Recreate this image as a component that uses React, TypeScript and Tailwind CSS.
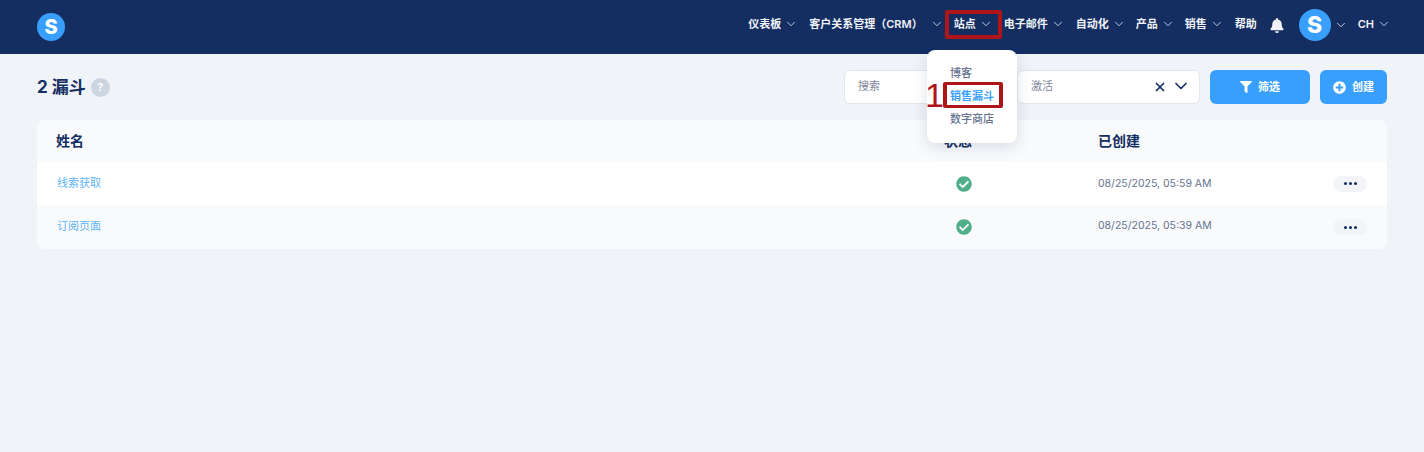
import { ChevronDown, X } from 'lucide-react';
import { FaBell, FaCheckCircle, FaFilter, FaPlusCircle } from 'react-icons/fa';

const font = "font-['Inter','Noto_Sans_CJK_SC',sans-serif]";

function NavItem({ label, gap = 'ml-[3px]', mr = 'mr-[11px]' }: { label: string; gap?: string; mr?: string }) {
  return (
    <div className={`flex items-center mb-[2px] ${mr}`}>
      <span className="text-[11px] font-semibold text-[#f1f3f8] whitespace-nowrap">{label}</span>
      <ChevronDown className={`w-[14px] h-[14px] text-[#d5dbe8] ${gap}`} strokeWidth={1.5} />
    </div>
  );
}

function Row({ name, date, striped }: { name: string; date: string; striped?: boolean }) {
  return (
    <div className={`grid grid-cols-[887px_154px_1fr] items-center pl-5 pr-5 ${striped ? 'h-[44px] bg-[#f9fafc]' : 'h-[43px] bg-white'}`}>
      <a className={`text-[11px] text-[#5fb3f6] ${striped ? 'pb-[2px]' : ''}`}>{name}</a>
      <div className="pl-[12px]">
        <FaCheckCircle className="w-4 h-4 text-[#50ae88]" />
      </div>
      <div className="flex items-center justify-between">
        <span className={`text-[10.5px] text-[#66738f] ${striped ? 'pb-[2px]' : ''}`}>{date}</span>
        <div className="w-[34px] h-4 rounded-lg bg-[#f3f4f7] flex items-center justify-center gap-[2px]">
          <i className="w-[3px] h-[3px] rounded-full bg-[#152e62]" />
          <i className="w-[3px] h-[3px] rounded-full bg-[#152e62]" />
          <i className="w-[3px] h-[3px] rounded-full bg-[#152e62]" />
        </div>
      </div>
    </div>
  );
}

export default function App() {
  return (
    <div className={`relative min-h-screen bg-[#f0f3f8] ${font}`}>
      {/* Navbar */}
      <header className="h-[54px] bg-[#142e62] flex items-center justify-between pl-[37px] pr-[33px]">
        <div className="w-7 h-7 rounded-full bg-[#399ffc] flex items-center justify-center text-white text-[20px] font-extrabold leading-none">S</div>
        <nav className="flex items-center mb-1">
          <NavItem label="仪表板" />
          <NavItem label="客户关系管理（CRM）" gap="ml-[7px]" mr="mr-[10px]" />
          <NavItem label="站点" />
          <NavItem label="电子邮件" />
          <NavItem label="自动化" mr="mr-[10px]" />
          <NavItem label="产品" mr="mr-[10px]" />
          <NavItem label="销售" />
          <span className="text-[11px] font-semibold text-[#f1f3f8] mr-[13px] mb-[2px]">帮助</span>
          <FaBell className="w-[14px] h-[15px] text-[#f1f3f8] mr-[15px] mt-[1px]" />
          <div className="w-8 h-8 rounded-full bg-[#399ffc] flex items-center justify-center text-white text-[23px] font-extrabold leading-none mr-[3px]">S</div>
          <ChevronDown className="w-[14px] h-[14px] text-[#d5dbe8] mr-[10px]" strokeWidth={1.5} />
          <span className="text-[11px] font-semibold text-[#f1f3f8] mr-[3px] mb-[2px]">CH</span>
          <ChevronDown className="w-[14px] h-[14px] text-[#d5dbe8] mb-[2px]" strokeWidth={1.5} />
        </nav>
      </header>

      <main className="px-[37px] pt-4">
        {/* Toolbar */}
        <div className="flex items-center justify-between h-[34px]">
          <div className="flex items-center">
            <span className="text-[17px] font-bold text-[#142e62] pt-[1px]">2 漏斗</span>
            <span className="ml-[5px] w-[19px] h-[19px] rounded-full bg-[#cdd5e1] flex items-center justify-center text-white text-[10px] font-bold">?</span>
          </div>
          <div className="flex items-center gap-[10px]">
            <div className="w-[163px] h-[34px] bg-white border border-[#e3e6ec] rounded-md flex items-center pl-[13px] pb-[1px] text-[11px] text-[#7d869b]">搜索</div>
            <div className="w-[183px] h-[34px] bg-white border border-[#e3e6ec] rounded-md flex items-center pl-[13px] pr-[8px] text-[11px] text-[#7d869b]">
              <span className="flex-1 pb-[1px]">激活</span>
              <X className="w-[14px] h-[14px] text-[#142e62] mr-[4px]" strokeWidth={3} />
              <ChevronDown className="w-5 h-5 text-[#142e62] mb-[2px]" strokeWidth={2} />
            </div>
            <button className="w-[100px] h-[34px] bg-[#399ffc] rounded-md flex items-center justify-center gap-[6px] text-white text-[11px] font-semibold">
              <FaFilter className="w-3 h-3" />
              筛选
            </button>
            <button className="w-[67px] h-[34px] bg-[#399ffc] rounded-md flex items-center justify-center gap-[6px] text-white text-[11px] font-semibold">
              <FaPlusCircle className="w-[13px] h-[13px]" />
              创建
            </button>
          </div>
        </div>

        {/* Table */}
        <div className="mt-4 rounded-lg overflow-hidden">
          <div className="grid grid-cols-[888px_154px_1fr] items-center h-[42px] bg-[#f9fafc] pl-[19px] pr-5 pb-[2px] text-[14px] font-semibold text-[#142e62]">
            <span>姓名</span>
            <span>状态</span>
            <span>已创建</span>
          </div>
          <Row name="线索获取" date="08/25/2025, 05:59 AM" />
          <Row name="订阅页面" date="08/25/2025, 05:39 AM" striped />
        </div>
      </main>

      {/* Dropdown */}
      <div className="absolute left-[927px] top-[50px] w-[90px] h-[93px] bg-white rounded-lg shadow-[0_4px_16px_rgba(20,46,98,0.14)] pl-[23px] pt-[14px] flex flex-col gap-[5px] text-[11px] font-medium leading-[18px] text-[#66738f]">
        <span>博客</span>
        <span className="font-semibold text-[#399ffc]">销售漏斗</span>
        <span>数字商店</span>
      </div>

      {/* Annotations */}
      <div className="absolute left-[945px] top-[10px] w-[57px] h-[29px] border-4 border-[#ad1519] rounded-[2px]" />
      <div className="absolute left-[943px] top-[82px] w-[60px] h-[26px] border-x-4 border-y-[3px] border-[#ad1519] rounded-[2px]" />
      <span className="absolute left-[925px] top-[76px] text-[34px] leading-[38px] text-[#ad1519] font-['Liberation_Sans',sans-serif]">1</span>
    </div>
  );
}
